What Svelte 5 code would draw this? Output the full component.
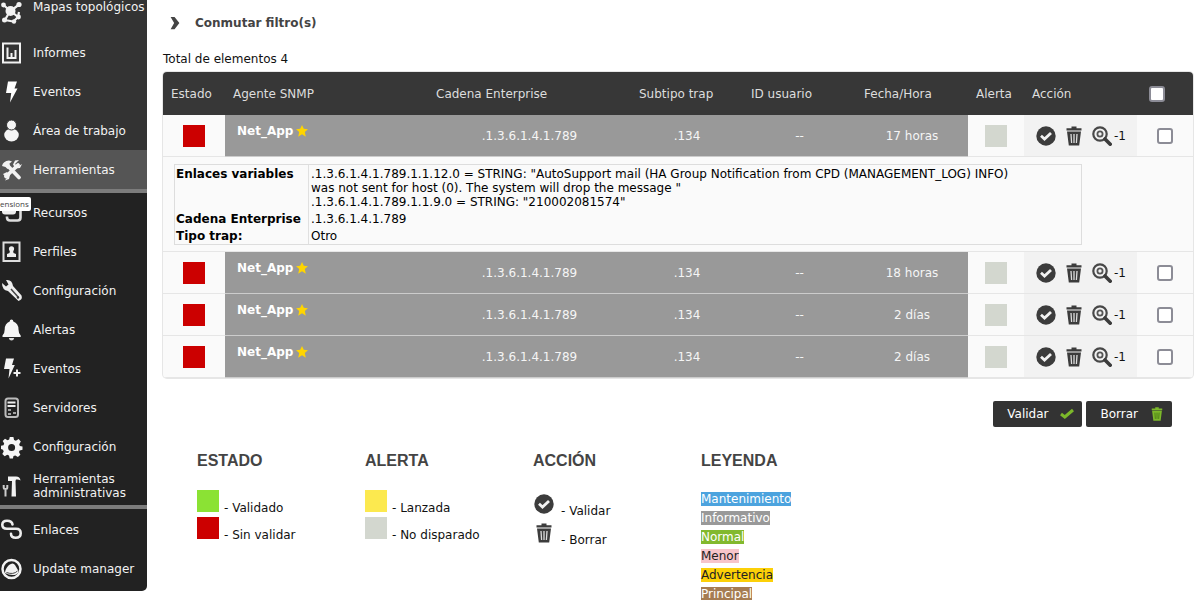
<script>
  const mainMenu = [
    { label: 'Mapas topológicos', icon: 'map' },
    { label: 'Informes', icon: 'report' },
    { label: 'Eventos', icon: 'bolt' },
    { label: 'Área de trabajo', icon: 'user' },
    { label: 'Herramientas', icon: 'tools', active: true }
  ];
  const adminMenu = [
    { label: 'Recursos', icon: 'resources' },
    { label: 'Perfiles', icon: 'profile' },
    { label: 'Configuración', icon: 'wrench' },
    { label: 'Alertas', icon: 'bell' },
    { label: 'Eventos', icon: 'boltplus' },
    { label: 'Servidores', icon: 'server' },
    { label: 'Configuración', icon: 'gear' },
    { label: 'Herramientas administrativas', icon: 'hammer' }
  ];
  const extraMenu = [
    { label: 'Enlaces', icon: 'link' },
    { label: 'Update manager', icon: 'update' }
  ];
  const traps = [
    { time: '17 horas', open: true },
    { time: '18 horas' },
    { time: '2 días' },
    { time: '2 días' }
  ];
  const severities = [
    ['Mantenimiento', 'maintenance'],
    ['Informativo', 'info'],
    ['Normal', 'normal'],
    ['Menor', 'minor'],
    ['Advertencia', 'warning'],
    ['Principal', 'major']
  ];
</script>

{#snippet icon(name)}
  <svg class="icon" viewBox="0 0 24 24" aria-hidden="true">
    {#if name === 'map'}
      <g stroke="#f2f2f2" stroke-width="2.200" fill="none"><path d="M3.500 5l7 6 8-6M10 11l-5 9 8 1.500M12 12l6 5 1-5M14 21l4-4" /></g>
      <g fill="#f2f2f2"><circle cx="10.500" cy="11" r="5" /><circle cx="3.500" cy="5" r="2.400" /><circle cx="19" cy="4.500" r="2.600" /><circle cx="4.500" cy="20" r="2.500" /><circle cx="14" cy="21.500" r="2.200" /><circle cx="18.500" cy="17" r="2.400" /></g>
    {:else if name === 'report'}
      <rect x="3" y="2.500" width="17" height="19" fill="none" stroke="#f2f2f2" stroke-width="2" />
      <path d="M7.500 6.500v10.500M11.500 17v-5M15.500 17v-8M6.500 17h10" fill="none" stroke="#f2f2f2" stroke-width="2" />
    {:else if name === 'bolt'}
      <path d="M8 1.500h9l-2.500 7h3L10 22.500l1.200-9.500H6z" fill="#fff" />
    {:else if name === 'user'}
      <ellipse cx="11.500" cy="16" rx="7.300" ry="6.500" fill="#f5f5f5" /><circle cx="11.500" cy="6" r="5" fill="#f5f5f5" stroke="#333" stroke-width="1" />
    {:else if name === 'tools'}
      <path d="M6 18.500L18 7M7 7l12 12.500" stroke="#f2f2f2" stroke-width="3.800" stroke-linecap="round" fill="none" />
      <path d="M2 8q1-5 7-5.500l3 1-2.500 2 .5 3-2.500 2.500-2-2zM15 6l4-4-4 .5-2 4 2.500 4 4.500-.500 2-4-4 2.500zM3 16l4-2 3 3-1 4-4 1.500 2-3-2-1z" fill="#f2f2f2" />
    {:else if name === 'resources'}
      <rect x="2" y="1.500" width="14" height="12" rx="3" fill="#eee" /><path d="M17.500 5q3 0 3 3v8.500q0 3-3 3H10q-3 0-3-3v-1" fill="none" stroke="#ddd" stroke-width="2.600" />
    {:else if name === 'profile'}
      <rect x="3.500" y="2.500" width="16" height="18.500" fill="none" stroke="#ddd" stroke-width="2" /><circle cx="11.500" cy="8.800" r="2.600" fill="#eee" /><path d="M10 10h3l.5 3 2.500 1v3H7v-3l2.500-1z" fill="#eee" />
    {:else if name === 'wrench'}
      <path d="M2 4l4 3.500 2.500-2L6 1q6-1 7 6l8.500 9.500q1.500 4-3 5.500L8 12Q2 11 2 4z" fill="#eee" /><path d="M11 10l7.500 8.500" stroke="#444" stroke-width="1.500" /><circle cx="18" cy="18.500" r="1.200" fill="#333" />
    {:else if name === 'bell'}
      <path d="M11.500 1.500q1.800 0 1.800 2 5.200 1.800 5.200 8 0 4 2.200 6v1.500H2.500v-1.500q2.200-2 2.200-6 0-6.200 5-8 0-2 1.800-2z" fill="#f5f5f5" /><path d="M8.800 20h5.400q-.500 2.500-2.700 2.500T8.800 20z" fill="#ddd" />
    {:else if name === 'boltplus'}
      <path d="M6 1.500h8l-2 6.500h2.800L8.500 21.500 9.500 12H4z" fill="#f5f5f5" /><path d="M17 12.500v7M13.500 16h7" stroke="#eee" stroke-width="2" />
    {:else if name === 'server'}
      <rect x="5.500" y="2.500" width="12.500" height="18.500" rx="2.500" fill="none" stroke="#bbb" stroke-width="2" /><path d="M7.500 6.500h8M7.500 10h8" stroke="#eee" stroke-width="2" /><path d="M8 14h3M13 17h3M8 18h3" stroke="#ccc" stroke-width="1.500" />
    {:else if name === 'gear'}
      <path fill-rule="evenodd" d="M9.800 2h3.600l.7 3 1.800.8L18.600 4l2.200 2.500-1.600 2.800.6 1.700 2.700.5v3.200l-2.800.8-.8 1.600 1.500 2.600-2.500 2.300-2.600-1.500-1.800.6-.6 2.400H9.700L9 20.500l-1.800-.7-2.500 1.500L2.300 19l1.400-2.600-.7-1.700-2-.7v-3.200l2.500-.6.7-1.700L2.700 6l2.300-2.300 2.500 1.500L9.200 4.500zM11.600 9a3.500 3.500 0 1 0 0 7 3.500 3.500 0 0 0 0-7z" fill="#f5f5f5" />
    {:else if name === 'hammer'}
      <path d="M8 2.500h8q4 0 4.500 4-2-1.500-4.500-1l-.5 1.500.5 15.500h-4.500L12 7H8z" fill="#f2f2f2" /><path d="M3.700 11v2.500q0 1.500 1.800 1.500t1.800-1.500V11M5.500 14.500v8" fill="none" stroke="#ccc" stroke-width="2" />
    {:else if name === 'link'}
      <path d="M12.500 6.500Q12 2.700 7 2.700q-4.700 0-4.700 4t4.700 4H16q4.700 0 4.700 4.500t-5 4.500q-4.700 0-4.700-4" fill="none" stroke="#eee" stroke-width="2.600" stroke-linecap="round" />
    {:else if name === 'update'}
      <circle cx="11.500" cy="12" r="9" fill="none" stroke="#f2f2f2" stroke-width="2.500" /><path d="M5 16q0-4 4-8 4-3 6 0l3.500 6q0 3-4 4-5 .5-9.500-2z" fill="#f2f2f2" /><path d="M6.500 15.500q7 2.500 11-1.500" stroke="#444" fill="none" />
    {/if}
  </svg>
{/snippet}

{#snippet check()}
  <svg class="glyph" viewBox="0 0 20 20" aria-hidden="true"><circle cx="10" cy="10" r="9.700" fill="#3c3c3c" /><path d="M5 9.800l3.500 3.200L15 7" fill="none" stroke="#f2f2f2" stroke-width="2.800" /></svg>
{/snippet}

{#snippet trash(color, gap)}
  <svg class="glyph" viewBox="0 0 20 20" aria-hidden="true"><path d="M2.500 2.200h5V.500h5v1.700h5v2.300h-15zM3 5.500h14l-1.800 14H4.800z" fill={color} /><path d="M7 8l.6 9M10 8v9M13 8l-.6 9" stroke={gap} stroke-width="1.300" /></svg>
{/snippet}

{#snippet menu(items)}
  <ul>
    {#each items as item}
      <li class:active={item.active}><a href="#menu">{@render icon(item.icon)}<span>{item.label}</span></a></li>
    {/each}
  </ul>
{/snippet}

<div class="page">
  <nav>
    <div class="primary">{@render menu(mainMenu)}</div>
    <div class="secondary">{@render menu(adminMenu)}</div>
    <div class="extra">{@render menu(extraMenu)}</div>
    <div class="tip">ensions</div>
  </nav>

  <main>
    <button class="toggle">
      <svg viewBox="0 0 10 16" aria-hidden="true"><path d="M0 1h4.500L10 8 4.500 15H0l4-7z" fill="#444" /></svg>
      Conmutar filtro(s)
    </button>
    <p class="total">Total de elementos 4</p>

    <table class="traps">
      <colgroup>
        <col class="c-state" /><col /><col /><col class="c-mid" /><col class="c-action" /><col class="c-mid" /><col class="c-small" /><col class="c-action" /><col class="c-small" />
      </colgroup>
      <thead>
        <tr>
          <th>Estado</th><th>Agente SNMP</th><th>Cadena Enterprise</th><th>Subtipo trap</th><th>ID usuario</th><th>Fecha/Hora</th><th>Alerta</th><th>Acción</th>
          <th class="all"><input type="checkbox" aria-label="Todos" /></th>
        </tr>
      </thead>
      <tbody>
        {#each traps as trap}
          <tr>
            <td><i class="box red"></i></td>
            <td class="sev agent"><a href="#agent">Net_App <svg viewBox="0 0 12 12" aria-hidden="true"><path d="M6 0l1.800 3.800 4.200.4-3.200 2.900 1 4.600L6 9.300l-3.800 2.400 1-4.600L0 4.200l4.200-.4z" fill="#ffd500" /></svg></a></td>
            <td class="sev">.1.3.6.1.4.1.789</td>
            <td class="sev">.134</td>
            <td class="sev">--</td>
            <td class="sev">{trap.time}</td>
            <td><i class="box grey"></i></td>
            <td class="act">
              <div class="actions">
                <button aria-label="Validar">{@render check()}</button>
                <button aria-label="Borrar">{@render trash('#3c3c3c', '#ddd')}</button>
                <button aria-label="Ver">
                  <svg class="glyph" viewBox="0 0 20 20" aria-hidden="true"><circle cx="8" cy="8" r="6.700" fill="none" stroke="#484848" stroke-width="2.200" /><circle cx="8" cy="8" r="2.600" fill="none" stroke="#555" stroke-width="1.800" /><path d="M13 13l5.200 5.200" stroke="#3c3c3c" stroke-width="3.600" stroke-linecap="round" /></svg>
                </button>
                <span>-1</span>
              </div>
            </td>
            <td><input type="checkbox" aria-label="Seleccionar" /></td>
          </tr>
          {#if trap.open}
            <tr class="detail">
              <td colspan="9">
                <table class="vars">
                  <tbody>
                    <tr>
                      <th>Enlaces variables</th>
                      <td>.1.3.6.1.4.1.789.1.1.12.0 = STRING: "AutoSupport mail (HA Group Notification from CPD (MANAGEMENT_LOG) INFO)<br />was not sent for host (0). The system will drop the message "<br />.1.3.6.1.4.1.789.1.1.9.0 = STRING: "210002081574"</td>
                    </tr>
                    <tr><th>Cadena Enterprise</th><td>.1.3.6.1.4.1.789</td></tr>
                    <tr><th>Tipo trap:</th><td>Otro</td></tr>
                  </tbody>
                </table>
              </td>
            </tr>
          {/if}
        {/each}
      </tbody>
    </table>

    <div class="buttons">
      <button>Validar <svg viewBox="0 0 14 14" aria-hidden="true"><path d="M1 7l3.800 3L13 3" fill="none" stroke="#7cb82a" stroke-width="3" /></svg></button>
      <button>Borrar {@render trash('#7cb82a', '#4a7a14')}</button>
    </div>

    <div class="legend">
      <section>
        <h3>ESTADO</h3>
        <div class="key"><i class="box green"></i><span>- Validado</span></div>
        <div class="key"><i class="box red"></i><span>- Sin validar</span></div>
      </section>
      <section>
        <h3>ALERTA</h3>
        <div class="key"><i class="box yellow"></i><span>- Lanzada</span></div>
        <div class="key"><i class="box grey"></i><span>- No disparado</span></div>
      </section>
      <section>
        <h3>ACCIÓN</h3>
        <div class="key tall">{@render check()}<span>- Validar</span></div>
        <div class="key tall">{@render trash('#3c3c3c', '#ddd')}<span>- Borrar</span></div>
      </section>
      <section>
        <h3>LEYENDA</h3>
        <ul>
          {#each severities as [label, kind]}
            <li><span class={kind}>{label}</span></li>
          {/each}
        </ul>
      </section>
    </div>
  </main>
</div>

<style>
  :global(body) {
    background: #fff;
    font: 12px/14px Verdana, "DejaVu Sans", sans-serif;
    color: #111;
    overflow: hidden;
  }
  .page { display: flex; align-items: flex-start; }
  ul { list-style: none; margin: 0; padding: 0; }
  button { font: inherit; color: inherit; border: 0; background: none; padding: 0; cursor: pointer; }

  nav { position: relative; width: 147px; flex: none; border-radius: 0 0 5px 0; overflow: hidden; background: #222; }
  nav a { display: flex; align-items: center; gap: 9px; height: 39px; color: #f2f2f2; text-decoration: none; }
  nav a span { flex: 1; }
  .icon { width: 24px; height: 24px; flex: none; }
  .primary { background: #333; border-bottom: 4px solid #7c7c7c; }
  .primary li:first-child a { height: 33px; align-items: flex-start; white-space: nowrap; }
  .active { background: #555; }
  .secondary { border-bottom: 4px solid #7c7c7c; }
  .extra { padding: 1px 0 3px; }
  .tip { position: absolute; left: 0; top: 197px; height: 14px; padding-right: 2px; background: #fff; color: #444; border-radius: 0 2px 2px 0; font: 8px/14px "Open Sans", "Noto Sans", sans-serif; }

  main { flex: 1; min-width: 0; padding: 15px 7px 0 16px; }
  .toggle { display: flex; align-items: center; gap: 15px; padding-left: 7px; font-weight: bold; color: #444; height: 16px; }
  .toggle svg { width: 10px; height: 14px; }
  .total { margin: 21px 0 6px; }

  .traps { width: 100%; table-layout: fixed; border-collapse: separate; border-spacing: 0; background: #fafafa; border-radius: 4px; overflow: hidden; box-shadow: 0 0 0 1px #e6e6e6; }
  .c-state { width: 62px; }
  .c-mid { width: 112px; }
  .c-action { width: 113px; }
  .c-small { width: 56px; }
  thead th { height: 43px; padding: 0 0 0 8px; background: #373737; color: #ddd; font-weight: normal; text-align: left; }
  .traps > tbody > tr > td { height: 41px; padding: 0; text-align: center; border-bottom: 1px solid #e6e6e6; }
  .traps > tbody > tr > .sev { background: #999; color: #f5f5f5; border-bottom-color: #ccc; }
  .traps > tbody > tr > .agent { text-align: left; vertical-align: top; padding: 9px 0 0 12px; height: 32px; }
  .agent a { color: #fff; font-weight: bold; text-decoration: none; display: flex; align-items: center; gap: 3px; }
  .agent svg { width: 12px; height: 12px; }
  .traps > tbody > tr > .act { background: #f2f2f2; }
  .box { display: block; width: 22px; height: 22px; flex: none; }
  td .box { margin: 0 auto; }
  .red { background: #c00; }
  .green { background: #8be234; }
  .yellow { background: #fce94f; }
  .grey { background: #d3d7cf; }
  .glyph { display: block; width: 20px; height: 20px; flex: none; }
  .actions { display: flex; align-items: center; gap: 8px; padding-left: 12px; }
  .actions span { margin-left: -6px; }
  input { appearance: none; display: block; width: 16px; height: 16px; margin: 0 auto; background: #fff; border: 2px solid #8c8c96; border-radius: 3px; box-sizing: border-box; }
  .all input { margin: 0 0 0 4px; }

  .traps > tbody > .detail > td { padding: 7px 10px 6px 11px; text-align: left; height: auto; }
  .vars { width: 90%; border-spacing: 0; border: 1px solid #ddd; color: #000; }
  .vars th, .vars td { padding: 2px 0 1px 2px; vertical-align: top; text-align: left; white-space: nowrap; }
  .vars th { width: 132px; padding-left: 1px; border-right: 1px solid #e0e0e0; }

  .buttons { display: flex; justify-content: flex-end; gap: 4px; padding: 23px 21px 0 0; }
  .buttons button { display: flex; align-items: center; gap: 12px; height: 26px; padding: 0 8px 0 14px; background: #333; color: #fff; border-radius: 2px; }
  .buttons svg { width: 14px; height: 14px; }

  .legend { display: grid; grid-template-columns: repeat(4, 168px); padding: 24px 0 0 34px; }
  h3 { margin: 0 0 19px; font: bold 16px/20px "Liberation Sans", Arial, sans-serif; color: #444; }
  .key { display: flex; align-items: flex-start; gap: 5px; height: 27px; }
  .key span { padding-top: 11px; }
  .tall { height: 29px; padding-left: 1px; gap: 7px; }
  .tall span { padding-top: 14px; }
  .tall .glyph { margin-top: 4px; }
  .legend li { height: 19px; padding-top: 2px; box-sizing: border-box; }
  .maintenance { background: #4ca3de; color: #fff; }
  .info { background: #999; color: #fff; }
  .normal { background: #82b92e; color: #fff; }
  .minor { background: #f7c5ca; color: #222; }
  .warning { background: #fcd008; color: #222; }
  .major { background: #a67c52; color: #fff; }
</style>
